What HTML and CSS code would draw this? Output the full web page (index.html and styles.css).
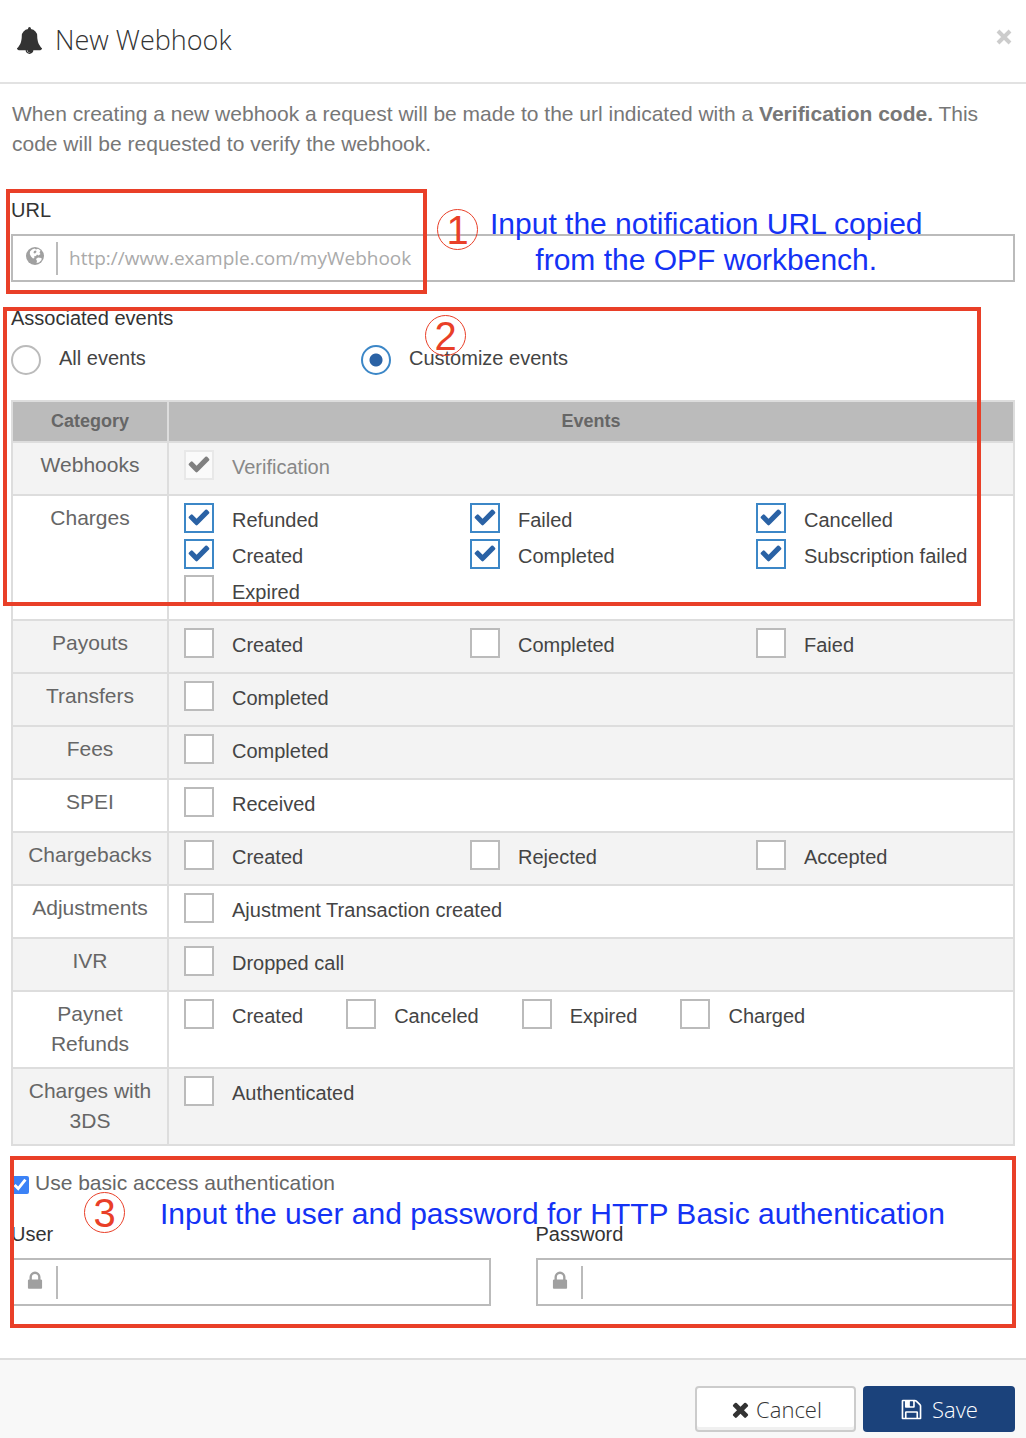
FILE: index.html
```html
<!DOCTYPE html>
<html lang="en">
<head>
<meta charset="utf-8">
<meta name="viewport" content="width=device-width, initial-scale=1">
<title>New Webhook</title>
<link rel="stylesheet" href="styles.css">
</head>
<body>
<form class="modal">
  <header class="modal-header">
    <svg class="icon-bell" viewBox="0 0 1792 1792" aria-hidden="true"><path d="M912 1696q0-16-16-16-59 0-101.5-42.500t-42.500-101.500q0-16-16-16t-16 16q0 73 51.500 124.500t124.500 51.500q16 0 16-16zm816-288q0 52-38 90t-90 38h-448q0 106-75 181t-181 75-181-75-75-181h-448q-52 0-90-38t-38-90q50-42 91-88t85-119.500 74.500-158.500 50-206 19.500-260q0-152 117-282.500t307-158.500q-8-19-8-39 0-40 28-68t68-28 68 28 28 68q0 20-8 39 190 28 307 158.500t117 282.500q0 139 19.500 260t50 206 74.500 158.500 85 119.500 91 88z"/></svg>
    <h1 class="modal-title">New Webhook</h1>
    <button class="close" type="button" aria-label="Close"><svg viewBox="0 0 16 16" aria-hidden="true"><path d="M2 2 14 14M14 2 2 14"/></svg></button>
  </header>

  <main class="modal-body">
    <p class="intro">When creating a new webhook a request will be made to the url indicated with a <b>Verification code.</b> This code will be requested to verify the webhook.</p>

    <section class="url-section">
      <label class="field-label" for="url">URL</label>
      <div class="input-box">
        <svg class="input-icon" viewBox="0 0 18 18" aria-hidden="true"><circle cx="9" cy="9" r="9"/><path class="land" d="M4 4.500 6 2.500 8.500 1.500 10 2.500 12 1.800 14.500 3.500 13.500 5.500 14.500 7 12.500 8.500 11 7.500 10 9 8 9.500 8.500 11 7 11.500 5 9.500 3.800 7zM10 12 12 10.500 15.500 11 15.500 13 13 15.500 10.500 16 11 14z"/><path d="M8 4 10 3.500 10.500 5 9 6.500 7.500 6z"/></svg>
        <input id="url" type="text" placeholder="http://www.example.com/myWebhook">
      </div>
      <div class="frame frame-url"></div>
      <span class="step step-one">1</span>
      <p class="note note-url">Input the notification URL copied<br>from the OPF workbench.</p>
    </section>

    <section class="events-section">
      <h2 class="field-label">Associated events</h2>
      <div class="radios">
        <label class="radio"><input type="radio" name="scope"><span>All events</span></label>
        <label class="radio"><input type="radio" name="scope" checked><span>Customize events</span></label>
      </div>
      <div class="frame frame-events"></div>
      <span class="step step-two">2</span>
    </section>

    <table class="events">
      <thead><tr><th class="category">Category</th><th>Events</th></tr></thead>
      <tbody>
        <tr class="shaded"><td>Webhooks</td><td><div class="grid"><label class="check"><input type="checkbox" checked disabled><span>Verification</span></label></div></td></tr>
        <tr><td>Charges</td><td><div class="grid">
          <label class="check"><input type="checkbox" checked><span>Refunded</span></label>
          <label class="check"><input type="checkbox" checked><span>Failed</span></label>
          <label class="check"><input type="checkbox" checked><span>Cancelled</span></label>
          <label class="check"><input type="checkbox" checked><span>Created</span></label>
          <label class="check"><input type="checkbox" checked><span>Completed</span></label>
          <label class="check"><input type="checkbox" checked><span>Subscription failed</span></label>
          <label class="check"><input type="checkbox"><span>Expired</span></label>
        </div></td></tr>
        <tr class="shaded"><td>Payouts</td><td><div class="grid">
          <label class="check"><input type="checkbox"><span>Created</span></label>
          <label class="check"><input type="checkbox"><span>Completed</span></label>
          <label class="check"><input type="checkbox"><span>Faied</span></label>
        </div></td></tr>
        <tr class="shaded"><td>Transfers</td><td><div class="inline"><label class="check"><input type="checkbox"><span>Completed</span></label></div></td></tr>
        <tr class="shaded"><td>Fees</td><td><div class="inline"><label class="check"><input type="checkbox"><span>Completed</span></label></div></td></tr>
        <tr><td>SPEI</td><td><div class="inline"><label class="check"><input type="checkbox"><span>Received</span></label></div></td></tr>
        <tr class="shaded"><td>Chargebacks</td><td><div class="grid">
          <label class="check"><input type="checkbox"><span>Created</span></label>
          <label class="check"><input type="checkbox"><span>Rejected</span></label>
          <label class="check"><input type="checkbox"><span>Accepted</span></label>
        </div></td></tr>
        <tr><td>Adjustments</td><td><div class="inline"><label class="check"><input type="checkbox"><span>Ajustment Transaction created</span></label></div></td></tr>
        <tr class="shaded"><td>IVR</td><td><div class="inline"><label class="check"><input type="checkbox"><span>Dropped call</span></label></div></td></tr>
        <tr><td>Paynet Refunds</td><td><div class="inline">
          <label class="check"><input type="checkbox"><span>Created</span></label>
          <label class="check"><input type="checkbox"><span>Canceled</span></label>
          <label class="check"><input type="checkbox"><span>Expired</span></label>
          <label class="check"><input type="checkbox"><span>Charged</span></label>
        </div></td></tr>
        <tr class="shaded"><td>Charges with 3DS</td><td><div class="inline"><label class="check"><input type="checkbox"><span>Authenticated</span></label></div></td></tr>
      </tbody>
    </table>

    <section class="auth-section">
      <label class="auth-toggle"><input type="checkbox" checked><span>Use basic access authentication</span></label>
      <div class="credentials">
        <div class="credential">
          <label class="field-label" for="user">User</label>
          <div class="input-box">
            <svg class="input-icon icon-lock" viewBox="0 0 1792 1792" aria-hidden="true"><path d="M640 768h512v-192q0-106-75-181t-181-75-181 75-75 181v192zm832 96v576q0 40-28 68t-68 28h-960q-40 0-68-28t-28-68v-576q0-40 28-68t68-28h32v-192q0-184 132-316t316-132 316 132 132 316v192h32q40 0 68 28t28 68z"/></svg>
            <input id="user" type="text">
          </div>
        </div>
        <div class="credential">
          <label class="field-label" for="password">Password</label>
          <div class="input-box">
            <svg class="input-icon icon-lock" viewBox="0 0 1792 1792" aria-hidden="true"><path d="M640 768h512v-192q0-106-75-181t-181-75-181 75-75 181v192zm832 96v576q0 40-28 68t-68 28h-960q-40 0-68-28t-28-68v-576q0-40 28-68t68-28h32v-192q0-184 132-316t316-132 316 132 132 316v192h32q40 0 68 28t28 68z"/></svg>
            <input id="password" type="password">
          </div>
        </div>
      </div>
      <div class="frame frame-auth"></div>
      <span class="step step-three">3</span>
      <p class="note note-auth">Input the user and password for HTTP Basic authentication</p>
    </section>
  </main>

  <footer class="modal-footer">
    <button class="btn btn-cancel" type="button"><svg viewBox="0 0 1792 1792" aria-hidden="true"><path d="M1490 1322q0 40-28 68l-136 136q-28 28-68 28t-68-28l-294-294-294 294q-28 28-68 28t-68-28l-136-136q-28-28-28-68t28-68l294-294-294-294q-28-28-28-68t28-68l136-136q28-28 68-28t68 28l294 294 294-294q28-28 68-28t68 28l136 136q28 28 28 68t-28 68l-294 294 294 294q28 28 28 68z"/></svg>Cancel</button>
    <button class="btn btn-save" type="submit"><svg viewBox="0 0 1792 1792" aria-hidden="true"><path d="M512 1536h768v-384h-768v384zm896 0h128v-896q0-14-10-38.500t-20-34.500l-281-281q-10-10-34-20t-39-10v416q0 40-28 68t-68 28h-576q-40 0-68-28t-28-68v-416h-128v1280h128v-416q0-40 28-68t68-28h832q40 0 68 28t28 68v416zm-384-928v-320q0-13-9.500-22.500t-22.500-9.500h-192q-13 0-22.500 9.500t-9.500 22.500v320q0 13 9.500 22.500t22.500 9.500h192q13 0 22.500-9.500t9.500-22.500zm640 32v928q0 40-28 68t-68 28h-1344q-40 0-68-28t-28-68v-1344q0-40 28-68t68-28h928q40 0 88 20t76 48l280 280q28 28 48 76t20 88z"/></svg>Save</button>
  </footer>
</form>
</body>
</html>
```
FILE: styles.css
```css
* { box-sizing: border-box; }
body {
  margin: 0;
  background: #fff;
  font-family: "Liberation Sans", Arial, sans-serif;
  font-size: 21px;
  line-height: 30px;
  color: #666;
}
h1, h2, p { margin: 0; font-weight: 400; }
button, input { font: inherit; }
input { margin: 0; }

.modal-header {
  display: flex;
  align-items: center;
  gap: 12px;
  height: 84px;
  padding: 0 14px 2px 16px;
  border-bottom: 2px solid #e2e2e2;
}
.icon-bell { width: 27px; height: 27px; fill: #333; }
.modal-title {
  flex: 1;
  font-family: "Open Sans", sans-serif;
  font-size: 27px;
  font-weight: 300;
  color: #333;
}
.close { display: flex; margin-bottom: 6px; padding: 0; border: 0; background: none; }
.close svg { width: 16px; height: 16px; fill: none; stroke: #ccc; stroke-width: 4; }

.modal-body { padding: 15px 11px 52px; }
.intro { padding: 0 1px; color: #777; }

.field-label { display: block; font-size: 20px; color: #333; }

.url-section { position: relative; margin-top: 36px; }
.input-box {
  display: flex;
  align-items: center;
  height: 48px;
  margin-top: 9px;
  border: 2px solid #bbb;
  background: #fff;
}
.input-icon { flex: none; width: 18px; height: 18px; margin: 0 12px 4px 13px; fill: #a0a0a0; }
.icon-lock { width: 22px; height: 22px; margin: 0 10px 3px 11px; }
.input-icon .land { fill: #fff; }
.input-box input {
  flex: 1;
  min-width: 0;
  height: 33px;
  padding: 0 11px;
  border: 0;
  border-left: 2px solid #bbb;
  outline: 0;
  background: none;
  font-family: "Open Sans", sans-serif;
  font-size: 19px;
  color: #444;
}
.input-box input::placeholder { color: #aaa; opacity: 1; }

.events-section { position: relative; margin-top: 21px; }
.radios { display: flex; margin-top: 12px; font-size: 20px; color: #444; }
.radio { display: flex; gap: 18px; width: 350px; }
.radio input {
  appearance: none;
  flex: none;
  width: 30px;
  height: 30px;
  border: 2px solid #bbb;
  border-radius: 50%;
  background: #fff;
}
.radio input:checked {
  border-color: #3c87c7;
  background: radial-gradient(circle, #2a62a5 6px, #fff 7px);
}
.radio span { line-height: 26px; }

.events { width: 100%; margin-top: 25px; border-collapse: collapse; }
.events th, .events td { border: 2px solid #ddd; }
.events th { height: 41px; padding: 0 0 2px; background: #bbb; font-size: 18px; }
.events .category { width: 156px; }
.events td { padding: 7px 15px 8px; vertical-align: top; }
.events td:first-child { padding: 7px 8px 8px; text-align: center; }
.shaded { background: #f3f3f3; }
.grid { display: grid; grid-template-columns: 286fr 286fr 242fr; }
.inline { display: flex; gap: 43px; }
.check { display: flex; gap: 18px; height: 36px; font-size: 20px; line-height: 34px; color: #444; }
.check input {
  appearance: none;
  flex: none;
  width: 30px;
  height: 30px;
  border: 2px solid #bbb;
  background: #fff;
}
.check input:checked {
  border-color: #3c87c7;
  background: #fff url("data:image/svg+xml,%3Csvg xmlns='http://www.w3.org/2000/svg' viewBox='0 0 1792 1792'%3E%3Cpath fill='%232a62a5' d='M1671 566q0 40-28 68l-724 724-136 136q-28 28-68 28t-68-28l-136-136-362-362q-28-28-28-68t28-68l136-136q28-28 68-28t68 28l294 295 656-657q28-28 68-28t68 28l136 136q28 28 28 68z'/%3E%3C/svg%3E") 1px 0 / 24px no-repeat;
}
.check input:disabled {
  border-color: #e8e8e8;
  background: #fafafa url("data:image/svg+xml,%3Csvg xmlns='http://www.w3.org/2000/svg' viewBox='0 0 1792 1792'%3E%3Cpath fill='%23808080' d='M1671 566q0 40-28 68l-724 724-136 136q-28 28-68 28t-68-28l-136-136-362-362q-28-28-28-68t28-68l136-136q28-28 68-28t68 28l294 295 656-657q28-28 68-28t68 28l136 136q28 28 28 68z'/%3E%3C/svg%3E") 1px 0 / 24px no-repeat;
}
.check input:disabled + span { color: #888; }

.auth-section { position: relative; margin-top: 22px; }
.auth-toggle { display: flex; align-items: center; gap: 6px; }
.auth-toggle input { width: 18px; height: 18px; margin-top: 3px; accent-color: #3b82f6; }
.credentials { display: flex; gap: 45px; margin-top: 21px; }
.credential { flex: 1; }

.frame { position: absolute; border: 4px solid #e93f28; pointer-events: none; }
.frame-url { top: -6px; left: -5px; width: 421px; height: 105px; }
.frame-events { top: 4px; left: -8px; right: 34px; height: 299px; }
.frame-auth { top: -12px; left: -1px; right: -1px; height: 172px; }
.step {
  position: absolute;
  width: 41px;
  height: 41px;
  border: 1px solid #e93f28;
  border-radius: 50%;
  font-size: 40px;
  line-height: 41px;
  text-align: center;
  color: #e93f28;
}
.step-one { top: 14px; left: 426px; }
.step-two { top: 12px; left: 414px; }
.step-three { top: 24px; left: 73px; }
.note {
  position: absolute;
  font-size: 30px;
  line-height: 36px;
  text-align: center;
  white-space: nowrap;
  color: #1432f5;
}
.note-url { top: 11px; left: 479px; }
.note-auth { top: 28px; left: 149px; }

.modal-footer {
  display: flex;
  justify-content: flex-end;
  gap: 7px;
  padding: 26px 11px 6px;
  border-top: 2px solid #ddd;
  background: #f8f8f8;
}
.btn {
  display: flex;
  align-items: center;
  justify-content: center;
  height: 46px;
  padding: 0;
  border-radius: 4px;
  font-family: "Open Sans", sans-serif;
  font-size: 22px;
  font-weight: 300;
}
.btn svg { width: 23px; height: 23px; fill: currentColor; }
.btn-cancel { gap: 4px; width: 161px; border: 2px solid #ccc; background: #fff; box-shadow: inset 0 -3px #f0f0f0; color: #333; }
.btn-save { gap: 9px; width: 152px; border: 0; background: #1b427b; color: #fff; }
```
